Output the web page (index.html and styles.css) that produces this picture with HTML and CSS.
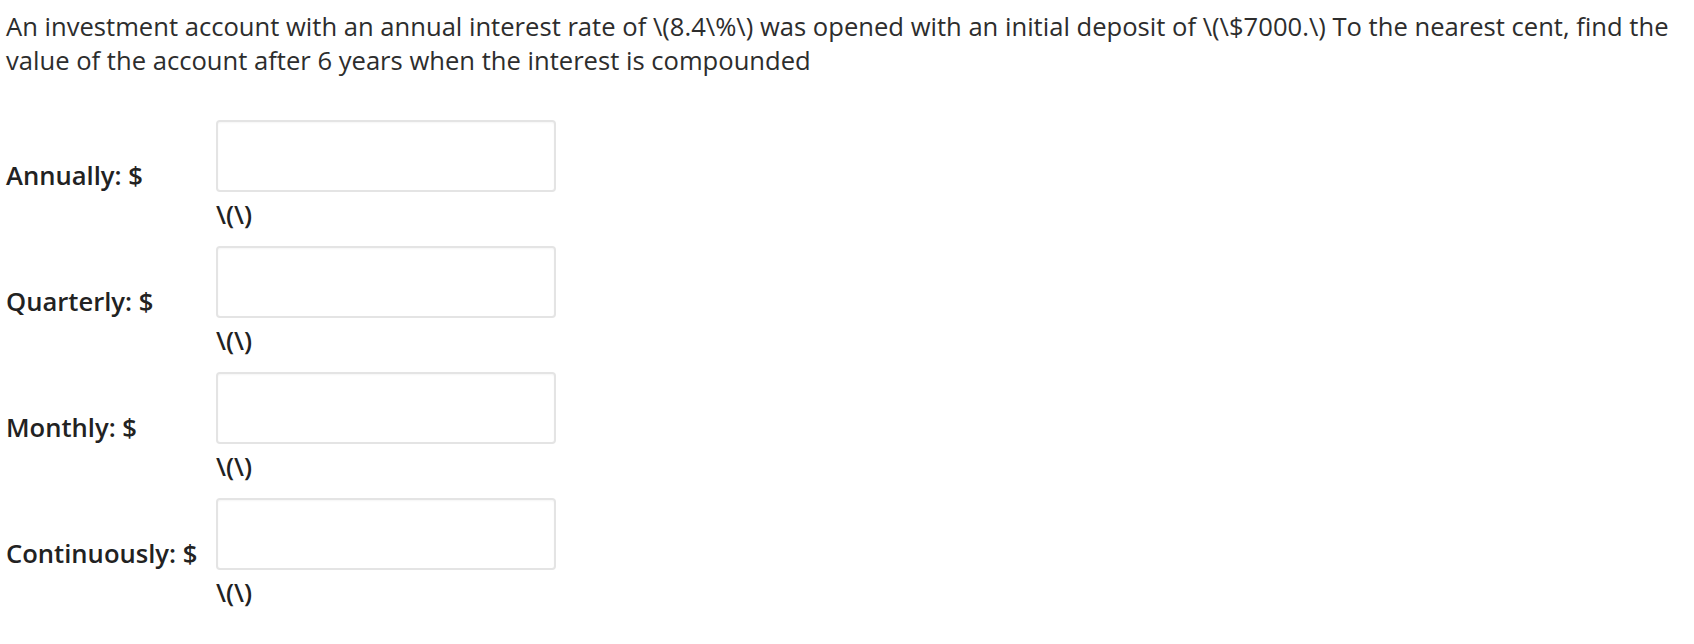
FILE: index.html
```html
<!DOCTYPE html>
<html>
<head>
<meta charset="utf-8">
<link rel="stylesheet" href="styles.css">
</head>
<body>
<div class="page">
  <p class="question">An investment account with an annual interest rate of \(8.4\%\) was opened with an initial deposit of \(\$7000.\) To the nearest cent, find the value of the account after 6 years when the interest is compounded</p>
  <div class="rows">
    <div class="row">
      <label class="label">Annually: $</label>
      <div class="field"><input class="box" type="text"><div class="math">\(\)</div></div>
    </div>
    <div class="row">
      <label class="label">Quarterly: $</label>
      <div class="field"><input class="box" type="text"><div class="math">\(\)</div></div>
    </div>
    <div class="row">
      <label class="label">Monthly: $</label>
      <div class="field"><input class="box" type="text"><div class="math">\(\)</div></div>
    </div>
    <div class="row">
      <label class="label">Continuously: $</label>
      <div class="field"><input class="box" type="text"><div class="math">\(\)</div></div>
    </div>
  </div>
</div>
</body>
</html>
```

FILE: styles.css
```css
html, body {
  margin: 0;
  padding: 0;
  background: #ffffff;
}
.page {
  padding: 10px 6px 0 6px;
  font-family: "Open Sans", "Liberation Sans", sans-serif;
  color: #2d2d2d;
}
.question {
  margin: 0;
  font-size: 25.6px;
  line-height: 34px;
}
.rows {
  margin-top: 42px;
  display: flex;
  flex-direction: column;
}
.row {
  display: grid;
  grid-template-columns: 210px 340px;
  align-items: center;
  padding-bottom: 16px;
}
.label {
  font-weight: 600;
  font-size: 25.6px;
  color: #222;
}
.field {
  display: flex;
  flex-direction: column;
}
.box {
  box-sizing: border-box;
  width: 340px;
  height: 72px;
  margin: 0;
  border: 2px solid #e4e4e4;
  border-radius: 4px;
  background: #fff;
  box-shadow: inset 0 1px 2px rgba(0, 0, 0, 0.04);
}
.math {
  font-weight: 600;
  font-size: 25.6px;
  line-height: 30px;
  margin-top: 8px;
  color: #222;
}
```
